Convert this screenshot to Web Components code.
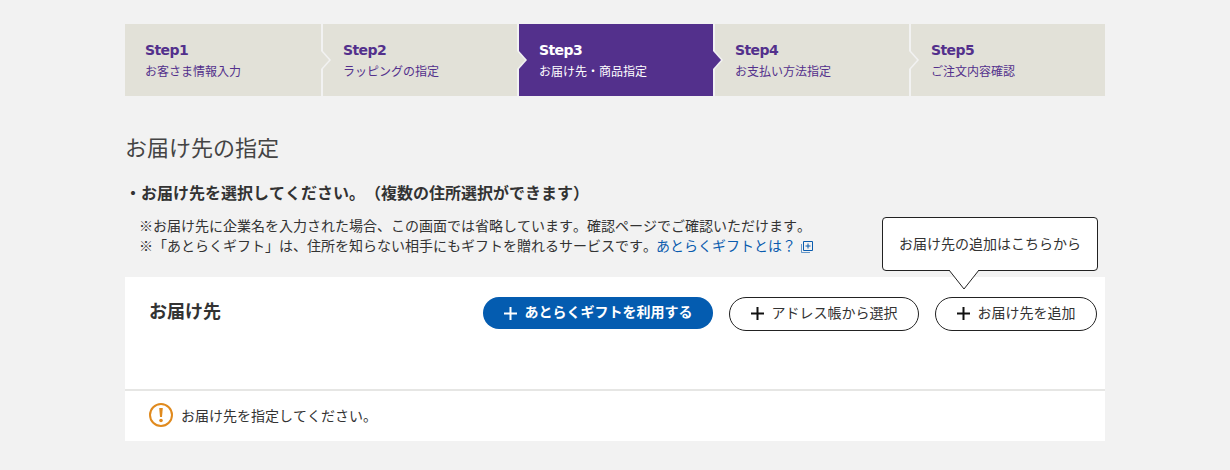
<!DOCTYPE html>
<html lang="ja">
<head>
<meta charset="utf-8">
<title>お届け先の指定</title>
<style>
  html, body { margin: 0; background: #f2f2f2; }
  body { font-family: "Noto Sans CJK JP", "Noto Sans", sans-serif; color: #333; font-kerning: none; text-spacing-trim: space-all; }
</style>
</head>
<body>
<order-page>
  <step-bar>
    <step-item num="Step1" first>お客さま情報入力</step-item>
    <step-item num="Step2">ラッピングの指定</step-item>
    <step-item num="Step3" active>お届け先・商品指定</step-item>
    <step-item num="Step4" after>お支払い方法指定</step-item>
    <step-item num="Step5">ご注文内容確認</step-item>
  </step-bar>
  <page-intro></page-intro>
  <address-panel>
    <pill-button primary style="width:230px;margin-right:16px">あとらくギフトを利用する</pill-button>
    <pill-button style="width:190px;margin-right:16px">アドレス帳から選択</pill-button>
    <pill-button style="width:162px">お届け先を追加</pill-button>
  </address-panel>
</order-page>

<script>
const pageTemplate = document.createElement('template')
pageTemplate.innerHTML = `
  <style>
    :host { display: block; width: 980px; margin: 0 auto; padding-top: 24px; }
  </style>
  <slot></slot>`

class OrderPage extends HTMLElement {
  constructor() {
    super()
    this.attachShadow({ mode: 'open' }).appendChild(pageTemplate.content.cloneNode(true))
  }
}

const barTemplate = document.createElement('template')
barTemplate.innerHTML = `
  <style>
    :host { display: grid; grid-template-columns: 196px repeat(4, 194px); column-gap: 2px; height: 72px; }
  </style>
  <slot></slot>`

class StepBar extends HTMLElement {
  constructor() {
    super()
    this.attachShadow({ mode: 'open' }).appendChild(barTemplate.content.cloneNode(true))
  }
}

const stepTemplate = document.createElement('template')
stepTemplate.innerHTML = `
  <style>
    :host {
      display: flex; flex-direction: column; position: relative; box-sizing: border-box;
      padding: 16px 0 0 20px; background: #e2e1d8; color: #53308c;
    }
    :host([active]) { background: #53308c; color: #fff; }
    .num { font: bold 14px/20px "DejaVu Sans", sans-serif; letter-spacing: -0.6px; }
    .label { font-size: 12px; line-height: 20px; margin-top: 1px; }
    .arrow { position: absolute; left: -2px; top: 27px; width: 10px; height: 18px; }
    :host([first]) .arrow { display: none; }
  </style>
  <svg class="arrow" viewBox="0 0 10 18">
    <path class="edge" d="M0 0H2L10 9L2 18H0Z" fill="#f2f2f2"/>
    <path class="fill" d="M0 0L8 9L0 18Z"/>
  </svg>
  <span class="num"></span>
  <span class="label"><slot></slot></span>`

class StepItem extends HTMLElement {
  constructor() {
    super()
    this.attachShadow({ mode: 'open' }).appendChild(stepTemplate.content.cloneNode(true))
  }

  connectedCallback() {
    this.shadowRoot.querySelector('.num').textContent = this.getAttribute('num')
    // the arrow carries the colour of the step before it
    let fill = this.hasAttribute('after') ? '#53308c' : '#e2e1d8'
    this.shadowRoot.querySelector('.fill').setAttribute('fill', fill)
  }
}

const introTemplate = document.createElement('template')
introTemplate.innerHTML = `
  <style>
    :host { display: block; padding-top: 34px; }
    h1 { margin: 0; font-size: 22px; font-weight: 400; line-height: 32px; color: #444; }
    h2 { margin: 18px 0 0; font-size: 16px; font-weight: 700; line-height: 24px; color: #333; }
    .notes { margin: 11px 0 0 14px; font-size: 14px; line-height: 20px; color: #333; height: 62px; }
    a { color: #0a5cae; text-decoration: none; margin-left: -1px; }
    svg { vertical-align: -2px; margin-left: 2px; }
  </style>
  <h1>お届け先の指定</h1>
  <h2>・お届け先を選択してください。（複数の住所選択ができます）</h2>
  <div class="notes">
    ※お届け先に企業名を入力された場合、この画面では省略しています。確認ページでご確認いただけます。<br>
    ※「あとらくギフト」は、住所を知らない相手にもギフトを贈れるサービスです。<a href="#">あとらくギフトとは？
    <svg width="12" height="12" viewBox="0 0 12 12" fill="none" stroke="#0a5cae"><path d="M2.500 .5h9v9h-9z"/><path d="M.5 3v8.500h8.500" stroke-opacity=".6"/><path d="M7 2.500v5M4.500 5h5"/></svg></a>
  </div>`

class PageIntro extends HTMLElement {
  constructor() {
    super()
    this.attachShadow({ mode: 'open' }).appendChild(introTemplate.content.cloneNode(true))
  }
}

const panelTemplate = document.createElement('template')
panelTemplate.innerHTML = `
  <style>
    :host { display: block; position: relative; background: #fff; }
    .head { display: flex; align-items: flex-start; height: 114px; box-sizing: border-box; padding: 20px 8px 0 24px; border-bottom: 2px solid #e6e6e4; }
    .title { flex: 1; font-size: 18px; font-weight: 700; line-height: 26px; color: #333; }
    .tip {
      position: absolute; left: 757px; top: -60px; width: 216px; height: 54px; box-sizing: border-box;
      display: flex; align-items: center; justify-content: center; padding-bottom: 2px;
      background: #fff; border: 1px solid #222; border-radius: 4px; font-size: 14px; color: #333;
    }
    .tip svg { position: absolute; left: 66px; top: 52px; }
    .foot { display: flex; align-items: center; gap: 8px; height: 50px; box-sizing: border-box; padding: 0 0 2px 24px; font-size: 14px; color: #333; }
  </style>
  <div class="head">
    <div class="title">お届け先</div>
    <slot></slot>
  </div>
  <div class="tip">お届け先の追加はこちらから
    <svg width="30" height="20" viewBox="0 0 30 20"><path d="M0 0L15 19L30 0" fill="#fff" stroke="#222"/></svg>
  </div>
  <div class="foot">
    <svg width="24" height="24" viewBox="0 0 24 24"><circle cx="12" cy="12" r="11" fill="none" stroke="#e08a1e" stroke-width="2"/><path d="M10.200 5h3.600l-.8 9h-2z" fill="#e08a1e"/><circle cx="12" cy="17.500" r="1.800" fill="#e08a1e"/></svg>
    <span>お届け先を指定してください。</span>
  </div>`

class AddressPanel extends HTMLElement {
  constructor() {
    super()
    this.attachShadow({ mode: 'open' }).appendChild(panelTemplate.content.cloneNode(true))
  }
}

const buttonTemplate = document.createElement('template')
buttonTemplate.innerHTML = `
  <style>
    :host {
      display: flex; align-items: center; justify-content: center; gap: 8px; box-sizing: border-box;
      height: 34px; padding-bottom: 1px; background: #fff; border: 1px solid #222; border-radius: 17px;
      font-size: 14px; color: #333; cursor: pointer;
    }
    :host([primary]) { height: 32px; padding-bottom: 0; background: #045cb0; border: 0; border-radius: 16px; color: #fff; font-weight: 700; }
    svg { flex: none; stroke: #111; }
    :host([primary]) svg { stroke: #fff; }
    span { margin-bottom: 4px; }
  </style>
  <svg width="13" height="13" viewBox="0 0 13 13"><path d="M6.500 0v13M0 6.500h13" stroke-width="2"/></svg>
  <span><slot></slot></span>`

class PillButton extends HTMLElement {
  constructor() {
    super()
    this.attachShadow({ mode: 'open' }).appendChild(buttonTemplate.content.cloneNode(true))
  }
}

customElements.define('order-page', OrderPage)
customElements.define('step-bar', StepBar)
customElements.define('step-item', StepItem)
customElements.define('page-intro', PageIntro)
customElements.define('address-panel', AddressPanel)
customElements.define('pill-button', PillButton)
</script>
</body>
</html>
